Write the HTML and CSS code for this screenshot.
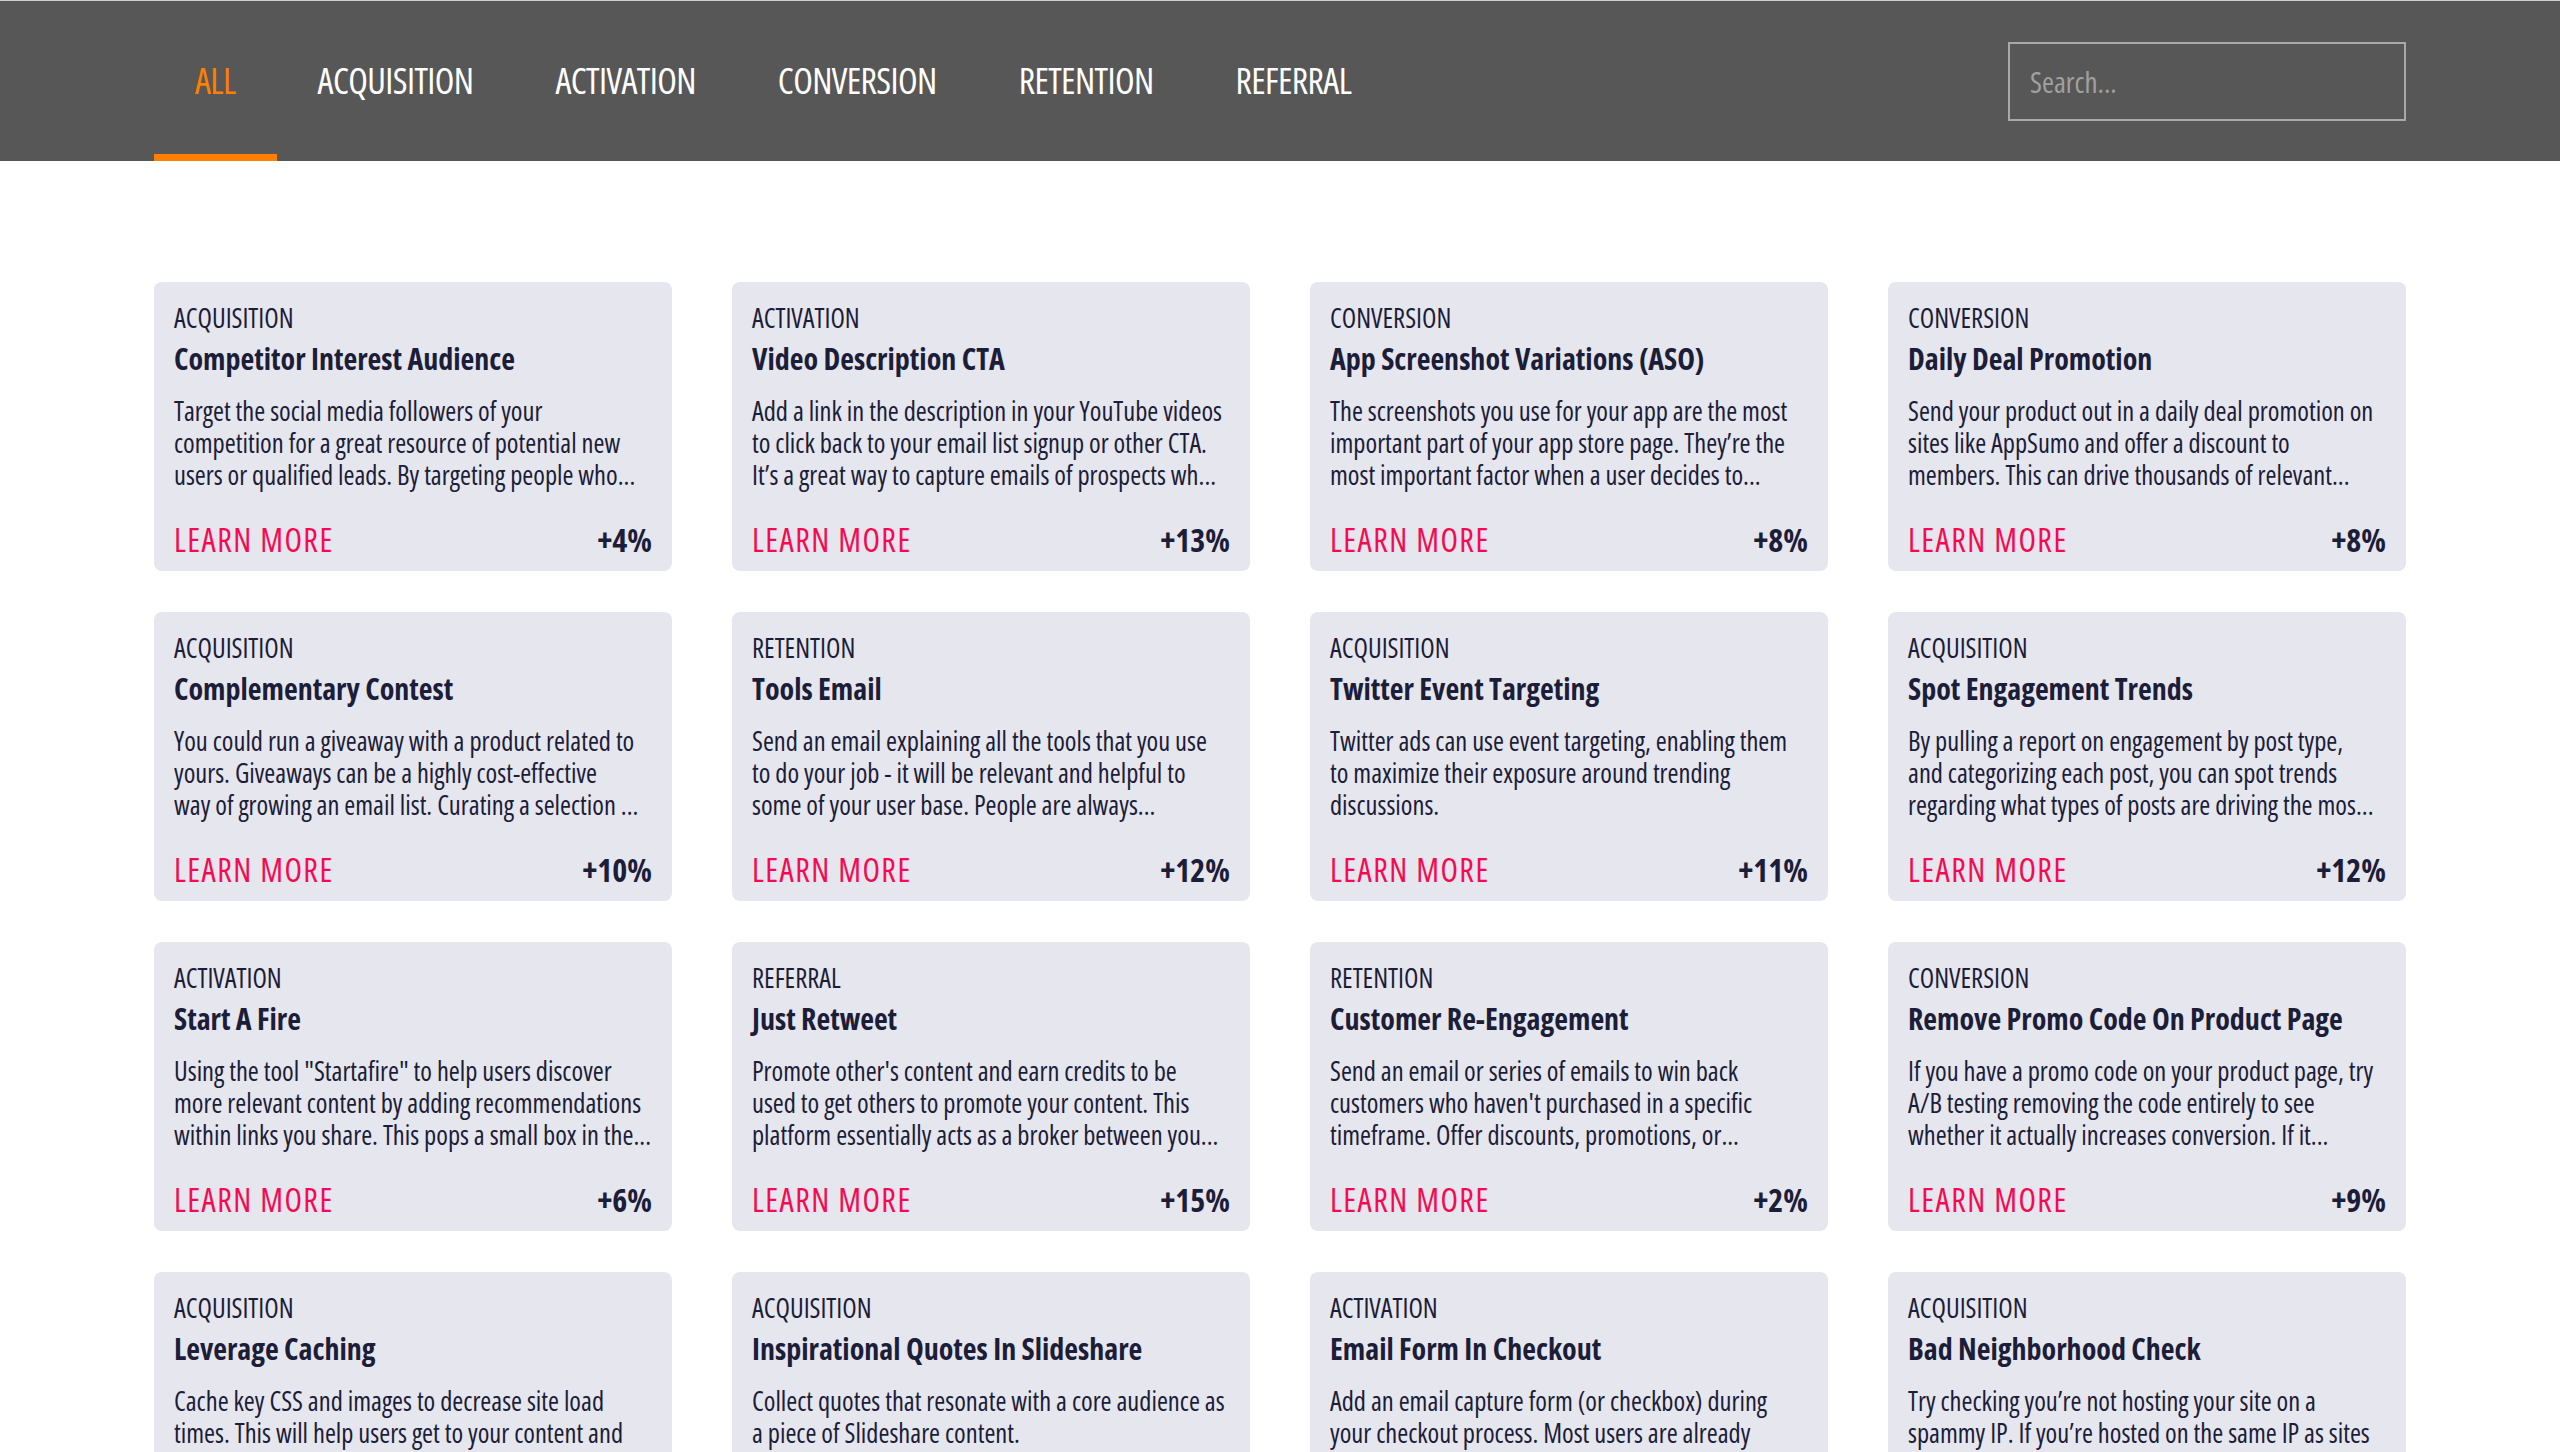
FILE: index.html
```html
<!DOCTYPE html>
<html lang="en">
<head>
    <meta charset="UTF-8">
    <meta name="viewport" content="width=device-width, initial-scale=1.0">
    <title>Growth Tactics</title>
    <link rel="stylesheet" href="styles.css">
</head>
<body>
    <header class="topbar">
        <div class="topbar-inner">
            <nav class="tabs">
                <a href="#" class="tab active">ALL</a>
                <a href="#" class="tab">ACQUISITION</a>
                <a href="#" class="tab">ACTIVATION</a>
                <a href="#" class="tab">CONVERSION</a>
                <a href="#" class="tab">RETENTION</a>
                <a href="#" class="tab">REFERRAL</a>
            </nav>
            <input class="search" type="text" placeholder="Search...">
        </div>
    </header>

    <main class="grid">
        <div class="card">
            <div class="card-cat">ACQUISITION</div>
            <div class="card-title">Competitor Interest Audience</div>
            <p class="card-desc">Target the social media followers of your<br>competition for a great resource of potential new<br>users or qualified leads. By targeting people who...</p>
            <div class="card-foot"><a href="#" class="learn">LEARN MORE</a><span class="lift">+4%</span></div>
        </div>
        <div class="card">
            <div class="card-cat">ACTIVATION</div>
            <div class="card-title">Video Description CTA</div>
            <p class="card-desc">Add a link in the description in your YouTube videos<br>to click back to your email list signup or other CTA.<br>It’s a great way to capture emails of prospects wh...</p>
            <div class="card-foot"><a href="#" class="learn">LEARN MORE</a><span class="lift">+13%</span></div>
        </div>
        <div class="card">
            <div class="card-cat">CONVERSION</div>
            <div class="card-title">App Screenshot Variations (ASO)</div>
            <p class="card-desc">The screenshots you use for your app are the most<br>important part of your app store page. They’re the<br>most important factor when a user decides to...</p>
            <div class="card-foot"><a href="#" class="learn">LEARN MORE</a><span class="lift">+8%</span></div>
        </div>
        <div class="card">
            <div class="card-cat">CONVERSION</div>
            <div class="card-title">Daily Deal Promotion</div>
            <p class="card-desc">Send your product out in a daily deal promotion on<br>sites like AppSumo and offer a discount to<br>members. This can drive thousands of relevant...</p>
            <div class="card-foot"><a href="#" class="learn">LEARN MORE</a><span class="lift">+8%</span></div>
        </div>

        <div class="card">
            <div class="card-cat">ACQUISITION</div>
            <div class="card-title">Complementary Contest</div>
            <p class="card-desc">You could run a giveaway with a product related to<br>yours. Giveaways can be a highly cost-effective<br>way of growing an email list. Curating a selection ...</p>
            <div class="card-foot"><a href="#" class="learn">LEARN MORE</a><span class="lift">+10%</span></div>
        </div>
        <div class="card">
            <div class="card-cat">RETENTION</div>
            <div class="card-title">Tools Email</div>
            <p class="card-desc">Send an email explaining all the tools that you use<br>to do your job - it will be relevant and helpful to<br>some of your user base. People are always...</p>
            <div class="card-foot"><a href="#" class="learn">LEARN MORE</a><span class="lift">+12%</span></div>
        </div>
        <div class="card">
            <div class="card-cat">ACQUISITION</div>
            <div class="card-title">Twitter Event Targeting</div>
            <p class="card-desc">Twitter ads can use event targeting, enabling them<br>to maximize their exposure around trending<br>discussions.</p>
            <div class="card-foot"><a href="#" class="learn">LEARN MORE</a><span class="lift">+11%</span></div>
        </div>
        <div class="card">
            <div class="card-cat">ACQUISITION</div>
            <div class="card-title">Spot Engagement Trends</div>
            <p class="card-desc">By pulling a report on engagement by post type,<br>and categorizing each post, you can spot trends<br>regarding what types of posts are driving the mos...</p>
            <div class="card-foot"><a href="#" class="learn">LEARN MORE</a><span class="lift">+12%</span></div>
        </div>

        <div class="card">
            <div class="card-cat">ACTIVATION</div>
            <div class="card-title">Start A Fire</div>
            <p class="card-desc">Using the tool "Startafire" to help users discover<br>more relevant content by adding recommendations<br>within links you share. This pops a small box in the...</p>
            <div class="card-foot"><a href="#" class="learn">LEARN MORE</a><span class="lift">+6%</span></div>
        </div>
        <div class="card">
            <div class="card-cat">REFERRAL</div>
            <div class="card-title">Just Retweet</div>
            <p class="card-desc">Promote other's content and earn credits to be<br>used to get others to promote your content. This<br>platform essentially acts as a broker between you...</p>
            <div class="card-foot"><a href="#" class="learn">LEARN MORE</a><span class="lift">+15%</span></div>
        </div>
        <div class="card">
            <div class="card-cat">RETENTION</div>
            <div class="card-title">Customer Re-Engagement</div>
            <p class="card-desc">Send an email or series of emails to win back<br>customers who haven't purchased in a specific<br>timeframe. Offer discounts, promotions, or...</p>
            <div class="card-foot"><a href="#" class="learn">LEARN MORE</a><span class="lift">+2%</span></div>
        </div>
        <div class="card">
            <div class="card-cat">CONVERSION</div>
            <div class="card-title">Remove Promo Code On Product Page</div>
            <p class="card-desc">If you have a promo code on your product page, try<br>A/B testing removing the code entirely to see<br>whether it actually increases conversion. If it...</p>
            <div class="card-foot"><a href="#" class="learn">LEARN MORE</a><span class="lift">+9%</span></div>
        </div>

        <div class="card">
            <div class="card-cat">ACQUISITION</div>
            <div class="card-title">Leverage Caching</div>
            <p class="card-desc">Cache key CSS and images to decrease site load<br>times. This will help users get to your content and<br>have a better experience on your site...</p>
            <div class="card-foot"><a href="#" class="learn">LEARN MORE</a><span class="lift">+5%</span></div>
        </div>
        <div class="card">
            <div class="card-cat">ACQUISITION</div>
            <div class="card-title">Inspirational Quotes In Slideshare</div>
            <p class="card-desc">Collect quotes that resonate with a core audience as<br>a piece of Slideshare content.</p>
            <div class="card-foot"><a href="#" class="learn">LEARN MORE</a><span class="lift">+7%</span></div>
        </div>
        <div class="card">
            <div class="card-cat">ACTIVATION</div>
            <div class="card-title">Email Form In Checkout</div>
            <p class="card-desc">Add an email capture form (or checkbox) during<br>your checkout process. Most users are already<br>entering their email address to buy...</p>
            <div class="card-foot"><a href="#" class="learn">LEARN MORE</a><span class="lift">+6%</span></div>
        </div>
        <div class="card">
            <div class="card-cat">ACQUISITION</div>
            <div class="card-title">Bad Neighborhood Check</div>
            <p class="card-desc">Try checking you’re not hosting your site on a<br>spammy IP. If you’re hosted on the same IP as sites<br>that are penalized, your rankings can suffer...</p>
            <div class="card-foot"><a href="#" class="learn">LEARN MORE</a><span class="lift">+4%</span></div>
        </div>
    </main>
</body>
</html>
```

FILE: styles.css
```css
* {
    margin: 0;
    padding: 0;
    box-sizing: border-box;
}

body {
    background-color: #fff;
    font-family: "Open Sans", "DejaVu Sans Condensed", sans-serif;
    font-stretch: 75%;
    color: #1c1d38;
}

.topbar {
    background-color: #575757;
    border-top: 1px solid #cfcfcf;
    height: 161px;
}

.topbar-inner {
    width: 2252px;
    height: 100%;
    margin: 0 auto;
    display: flex;
    justify-content: space-between;
    align-items: center;
}

.tabs {
    display: flex;
    height: 100%;
}

.tab {
    display: flex;
    align-items: center;
    padding: 7px 41px 2px;
    color: #fff;
    text-decoration: none;
    font-size: 36px;
    letter-spacing: -0.6px;
    border-bottom: 7px solid transparent;
}

.tab.active {
    color: #ff7f00;
    border-bottom-color: #ff7f00;
}

.search {
    width: 398px;
    height: 79px;
    background: transparent;
    border: 2px solid #a9a9a9;
    padding: 0 20px;
    font-family: inherit;
    font-stretch: 75%;
    font-size: 29px;
    color: #fff;
    outline: none;
}

.search::placeholder {
    color: #a0a0a0;
}

.grid {
    width: 2252px;
    margin: 121px auto 0;
    display: grid;
    grid-template-columns: repeat(4, 1fr);
    column-gap: 60px;
    row-gap: 41px;
}

.card {
    background-color: #e6e6ee;
    border-radius: 8px;
    padding: 18px 20px 12px;
}

.card-cat {
    font-size: 26.5px;
    line-height: 36px;
}

.card-title {
    font-size: 30px;
    font-weight: 700;
    line-height: 38px;
    margin-top: 4px;
}

.card-desc {
    font-size: 26.5px;
    line-height: 32px;
    margin-top: 17px;
    min-height: 96px;
    white-space: nowrap;
}

.card-foot {
    display: flex;
    justify-content: space-between;
    align-items: center;
    margin-top: 28px;
    height: 40px;
}

.learn {
    color: #f8094f;
    text-decoration: none;
    font-size: 32px;
    letter-spacing: 1.5px;
}

.lift {
    font-size: 32px;
    font-weight: 700;
}
```
